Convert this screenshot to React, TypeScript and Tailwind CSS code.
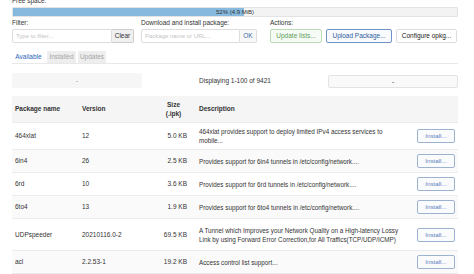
import type { ReactNode } from "react";

type Pkg = {
  name: string;
  version: string;
  size: string;
  desc: ReactNode;
  h: string;
};

const packages: Pkg[] = [
  {
    name: "464xlat",
    version: "12",
    size: "5.0 KB",
    desc: "464xlat provides support to deploy limited IPv4 access services to mobile...",
    h: "h-[27px]",
  },
  {
    name: "6in4",
    version: "26",
    size: "2.5 KB",
    desc: "Provides support for 6in4 tunnels in /etc/config/network....",
    h: "h-[23px]",
  },
  {
    name: "6rd",
    version: "10",
    size: "3.6 KB",
    desc: "Provides support for 6rd tunnels in /etc/config/network....",
    h: "h-[23px]",
  },
  {
    name: "6to4",
    version: "13",
    size: "1.9 KB",
    desc: "Provides support for 6to4 tunnels in /etc/config/network....",
    h: "h-[23px]",
  },
  {
    name: "UDPspeeder",
    version: "20210116.0-2",
    size: "69.5 KB",
    desc: "A Tunnel which Improves your Network Quality on a High-latency Lossy Link by using Forward Error Correction,for All Traffics(TCP/UDP/ICMP)",
    h: "h-[32px]",
  },
  {
    name: "acl",
    version: "2.2.53-1",
    size: "19.2 KB",
    desc: "Access control list support...",
    h: "h-[23px]",
  },
  {
    name: "adblock",
    version: "4.1.3-2",
    size: "27.4 KB",
    desc: "Powerful adblock script to block ad/abuse domains...",
    h: "h-[23px]",
  },
];

export default function App(): ReactNode {
  return (
    <div className="w-[474px] h-[274px] overflow-hidden bg-white text-[#333] font-['Liberation_Sans',Arial,sans-serif]">
      <div className="px-3 -mt-[4px]">
        <div className="text-[6.5px] leading-[9px]">Free space:</div>
        <div className="relative mt-[2px] h-[10px] w-[446px] rounded-[1px] border border-[#e3e3e3] bg-[#f3f3f3] overflow-hidden">
          <div className="h-full w-[52%] bg-[#86b9dd]" />
          <div className="absolute inset-0 flex items-center justify-center text-[6px] text-[#333]">
            52% (4.9 MiB)
          </div>
        </div>

        <div className="mt-[2px] flex">
          <div className="w-[130px]">
            <div className="text-[6.5px] leading-[8px]">Filter:</div>
            <div className="mt-[2px] flex h-[14px]">
              <div className="flex w-[100px] items-center rounded-l-[2px] border border-[#ddd] px-[3px] text-[6px] text-[#c4c4c4]">
                Type to filter...
              </div>
              <div className="flex w-[22px] items-center justify-center rounded-r-[2px] border border-l-0 border-[#ccc] bg-[#f0f0f0] text-[6.5px] text-[#333]">
                Clear
              </div>
            </div>
          </div>
          <div className="ml-[-1px] w-[129px]">
            <div className="text-[6.5px] leading-[8px]">Download and install package:</div>
            <div className="mt-[2px] flex h-[14px]">
              <div className="flex w-[99px] items-center rounded-l-[2px] border border-[#ddd] px-[3px] text-[6px] text-[#c4c4c4]">
                Package name or URL...
              </div>
              <div className="flex w-[17px] items-center justify-center rounded-r-[2px] border border-l-0 border-[#ddd] bg-[#f8f8f8] text-[6.5px] text-[#3d6aa8]">
                OK
              </div>
            </div>
          </div>
          <div>
            <div className="text-[6.5px] leading-[8px]">Actions:</div>
            <div className="mt-[2px] flex h-[14px] gap-[4px]">
              <div className="flex w-[52px] items-center justify-center rounded-[2px] border border-[#bcdcb6] bg-[#f7fbf6] text-[6.5px] text-[#5c9e55]">
                Update lists...
              </div>
              <div className="flex w-[66px] items-center justify-center rounded-[2px] border border-[#6f94c6] bg-[#f8fafd] text-[6.5px] text-[#2f5c9a]">
                Upload Package...
              </div>
              <div className="flex w-[61px] items-center justify-center rounded-[2px] border border-[#ddd] bg-white text-[6.5px] text-[#222]">
                Configure opkg...
              </div>
            </div>
          </div>
        </div>

        <div className="mt-[8px] flex h-[13px] w-[446px] items-stretch gap-[2px] border-b border-[#e8e8e8]">
          <div className="flex w-[33px] items-center justify-center bg-white text-[6.5px] text-[#2d66b8]">
            Available
          </div>
          <div className="flex w-[29px] items-center justify-center rounded-t-[1px] bg-[#eeeeee] text-[6.5px] text-[#a5a5a5]">
            Installed
          </div>
          <div className="flex w-[28px] items-center justify-center rounded-t-[1px] bg-[#eeeeee] text-[6.5px] text-[#a5a5a5]">
            Updates
          </div>
        </div>

        <div className="mt-[9px] flex h-[15px] w-[446px] items-center">
          <div className="flex h-[15px] w-[130px] items-center justify-center rounded-[2px] bg-[#f6f6f6] text-[6.5px] text-[#999]">
            -
          </div>
          <div className="flex-1 text-center text-[6.5px] text-[#333]">Displaying 1-100 of 9421</div>
          <div className="mt-[2px] flex h-[13px] w-[130px] items-center justify-center rounded-[2px] border border-[#e3e3e3] bg-[#f9f9f9] text-[6.5px] text-[#333]">
            -
          </div>
        </div>

        <div className="mt-[8px] w-[446px]">
          <div className="flex h-[26px] items-center bg-[#f5f5f5] text-[6.5px] font-bold text-[#333]">
            <div className="w-[70px] pl-[3px]">Package name</div>
            <div className="w-[78px]">Version</div>
            <div className="w-[27px] text-center leading-[9px]">
              Size
              <br />
              (.ipk)
            </div>
            <div className="pl-[12px]">Description</div>
          </div>
          {packages.map((p, i) => (
            <div
              key={p.name}
              className={`flex ${p.h} items-center border-t border-[#ececec] text-[6.5px] ${i % 2 === 1 ? "bg-[#fafafa]" : "bg-white"}`}
            >
              <div className="w-[70px] pl-[3px]">{p.name}</div>
              <div className="w-[78px]">{p.version}</div>
              <div className="w-[27px] text-right">{p.size}</div>
              <div className="w-[230px] pl-[12px] pr-[14px] text-[6.3px] leading-[9px]">{p.desc}</div>
              <div className="flex h-[14px] w-[38px] items-center justify-center rounded-[2px] border border-[#9db2d1] bg-[#f9fbfd] text-[6.2px] text-[#5b80b8]">
                Install...
              </div>
            </div>
          ))}
        </div>
      </div>
    </div>
  );
}
